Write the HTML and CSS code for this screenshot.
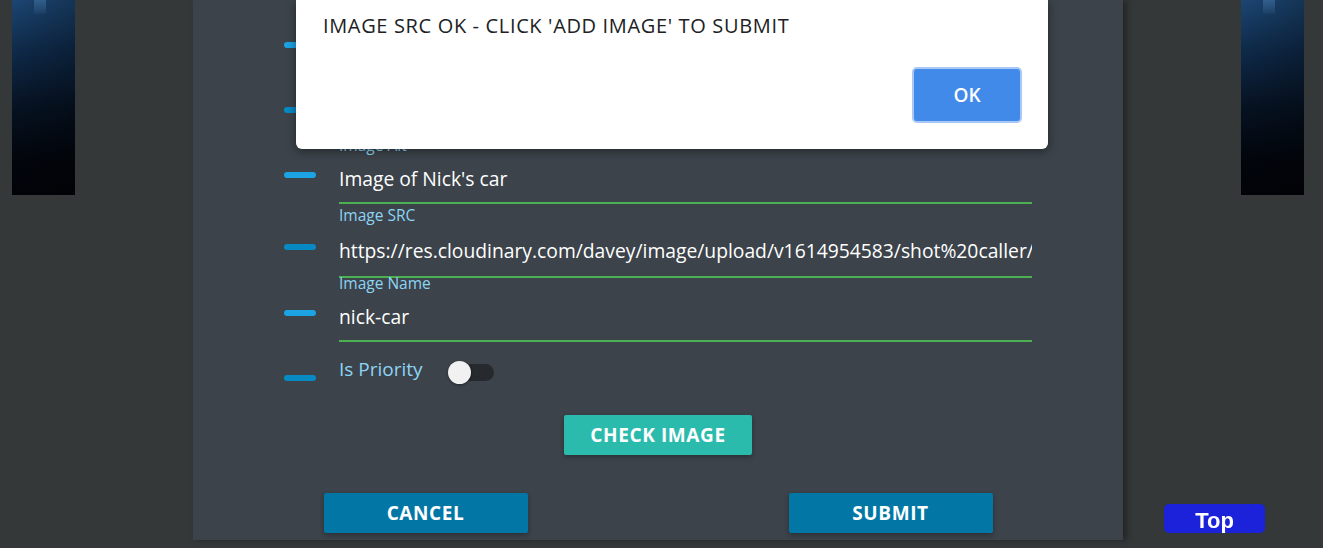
FILE: index.html
```html
<!DOCTYPE html>
<html lang="en">
<head>
<meta charset="utf-8">
<title>Add Image</title>
<link rel="stylesheet" href="styles.css">
</head>
<body>
<div class="page">
  <div class="side-img side-img--left"></div>
  <main class="card">
    <div class="row">
      <span class="dash dash--light"></span>
      <div class="field">
        <label class="field-label">Project</label>
        <input class="field-input" type="text" value="" readonly>
      </div>
    </div>
    <div class="row row--tight">
      <span class="dash dash--dark"></span>
      <div class="field">
        <label class="field-label">Image Title</label>
        <input class="field-input" type="text" value="" readonly>
      </div>
    </div>
    <div class="row row--tight">
      <span class="dash dash--light"></span>
      <div class="field">
        <label class="field-label">Image Alt</label>
        <input class="field-input" type="text" value="Image of Nick's car" readonly>
      </div>
    </div>
    <div class="row row--src">
      <span class="dash dash--dark dash--src"></span>
      <div class="field">
        <label class="field-label">Image SRC</label>
        <input class="field-input field-input--tall" type="text" value="https://res.cloudinary.com/davey/image/upload/v1614954583/shot%20caller/vintage-car.jpg" readonly>
      </div>
    </div>
    <div class="row row--name">
      <span class="dash dash--light"></span>
      <div class="field">
        <label class="field-label">Image Name</label>
        <input class="field-input" type="text" value="nick-car" readonly>
      </div>
    </div>
    <div class="row row--switch">
      <span class="dash dash--dark dash--switch"></span>
      <div class="switch-field">
        <span class="switch-label">Is Priority</span>
        <span class="switch">
          <span class="switch-track"></span>
          <span class="switch-knob"></span>
        </span>
      </div>
    </div>
    <div class="check-row">
      <button class="btn btn--check">CHECK IMAGE</button>
    </div>
    <div class="action-row">
      <div class="action-col"><button class="btn btn--action">CANCEL</button></div>
      <div class="action-col"><button class="btn btn--action">SUBMIT</button></div>
    </div>
  </main>
  <div class="side-img side-img--right"></div>
</div>

<div class="dialog">
  <p class="dialog-text">IMAGE SRC OK - CLICK 'ADD IMAGE' TO SUBMIT</p>
  <div class="dialog-actions">
    <button class="dialog-ok">OK</button>
  </div>
</div>

<button class="top-btn">Top</button>
</body>
</html>
```

FILE: styles.css
```css
* { box-sizing: border-box; }

html, body {
  margin: 0;
  padding: 0;
  background: #353839;
  height: 548px;
  overflow: hidden;
  font-family: "Open Sans", "Noto Sans", sans-serif;
}

.page {
  display: flex;
  align-items: flex-start;
  padding-left: 12px;
}

.side-img {
  width: 63px;
  height: 195px;
  flex: none;
  background:
    linear-gradient(180deg, rgba(70,120,170,0.55) 0px, rgba(70,120,170,0.15) 13px, rgba(70,120,170,0) 14px) 22px 0 / 12px 14px no-repeat,
    linear-gradient(90deg, rgba(0,0,0,0) 0%, rgba(0,0,0,0.25) 100%),
    linear-gradient(180deg, #1c4673 0%, #0f2b4b 25%, #061222 55%, #02060d 80%, #010308 100%);
}

.side-img--left { margin-right: 118px; }
.side-img--right { margin-left: 118px; }

.card {
  width: 930px;
  flex: none;
  background: #3c434a;
  padding: 7px 91px 7px 91px;
  box-shadow: 4px 0 6px rgba(0,0,0,0.35);
}

.row {
  display: flex;
  align-items: flex-start;
  gap: 23px;
}

.row--tight { margin-top: -2px; }
.row--src { margin-top: 3px; }
.row--name { margin-top: -3px; }
.row--switch { margin-top: 15px; }

.dash {
  flex: none;
  width: 32px;
  height: 6px;
  border-radius: 3px;
  margin-top: 35px;
}
.dash--src { margin-top: 37px; }
.dash--switch { margin-top: 18px; }
.dash--light { background: #1ba3e3; }
.dash--dark { background: #0789c4; }

.field {
  flex: 1;
  display: flex;
  flex-direction: column;
  min-width: 0;
}

.field-label {
  display: block;
  font-size: 15.5px;
  line-height: 17px;
  color: #8dd4f5;
}

.field-input {
  display: block;
  width: 100%;
  height: 50px;
  padding: 0;
  margin: 0;
  border: 0;
  border-bottom: 2px solid #4caf50;
  background: transparent;
  color: #ffffff;
  font-family: inherit;
  font-size: 19.3px;
  outline: none;
}
.field-input--tall { height: 54px; }

.switch-field {
  display: flex;
  align-items: center;
  height: 24px;
}

.switch-label {
  font-size: 19px;
  line-height: 24px;
  color: #8dd4f5;
}

.switch {
  position: relative;
  width: 46px;
  height: 22px;
  margin-left: 25px;
  margin-top: 6px;
}

.switch-track {
  position: absolute;
  left: 5px;
  top: 3px;
  width: 41px;
  height: 17px;
  border-radius: 9px;
  background: #262a2e;
}

.switch-knob {
  position: absolute;
  left: 0;
  top: 0;
  width: 23px;
  height: 23px;
  border-radius: 50%;
  background: #f1f1f1;
  box-shadow: 0 1px 3px rgba(0,0,0,0.4);
}

.check-row {
  display: flex;
  justify-content: center;
  margin-top: 34px;
}

.btn {
  border: 0;
  border-radius: 2px;
  color: #ffffff;
  font-family: inherit;
  font-weight: 700;
  font-size: 19px;
  letter-spacing: 0.6px;
  height: 40px;
  padding: 0;
  box-shadow: 0 2px 5px rgba(0,0,0,0.3);
}

.btn--check {
  width: 188px;
  background: #2bbbad;
}

.action-row {
  display: grid;
  grid-template-columns: 1fr 1fr;
  margin: 38px -91px 0;
}

.action-col {
  display: flex;
  justify-content: center;
}

.btn--action {
  width: 204px;
  background: #0277a6;
}

.dialog {
  position: absolute;
  left: 296px;
  top: 0;
  width: 752px;
  height: 149px;
  background: #ffffff;
  border-radius: 0 0 6px 6px;
  box-shadow: 0 2px 10px rgba(0,0,0,0.45);
  padding: 12px 26px 0 27px;
}

.dialog-text {
  margin: 0;
  font-size: 20px;
  letter-spacing: 0.65px;
  line-height: 27px;
  color: #202124;
}

.dialog-actions {
  display: flex;
  justify-content: flex-end;
  margin-top: 28px;
}

.dialog-ok {
  width: 110px;
  height: 56px;
  border: 2px solid #a9c8f5;
  border-radius: 5px;
  background: #428aea;
  color: #ffffff;
  font-family: inherit;
  font-weight: 600;
  font-size: 19px;
}

.top-btn {
  position: fixed;
  left: 1164px;
  top: 504px;
  width: 101px;
  height: 29px;
  border: 0;
  border-radius: 5px;
  background: #1b22d9;
  color: #ffffff;
  font-family: "Liberation Sans", Arial, sans-serif;
  font-weight: 700;
  font-size: 22px;
  line-height: 29px;
  padding: 2px 0 0;
}
```
